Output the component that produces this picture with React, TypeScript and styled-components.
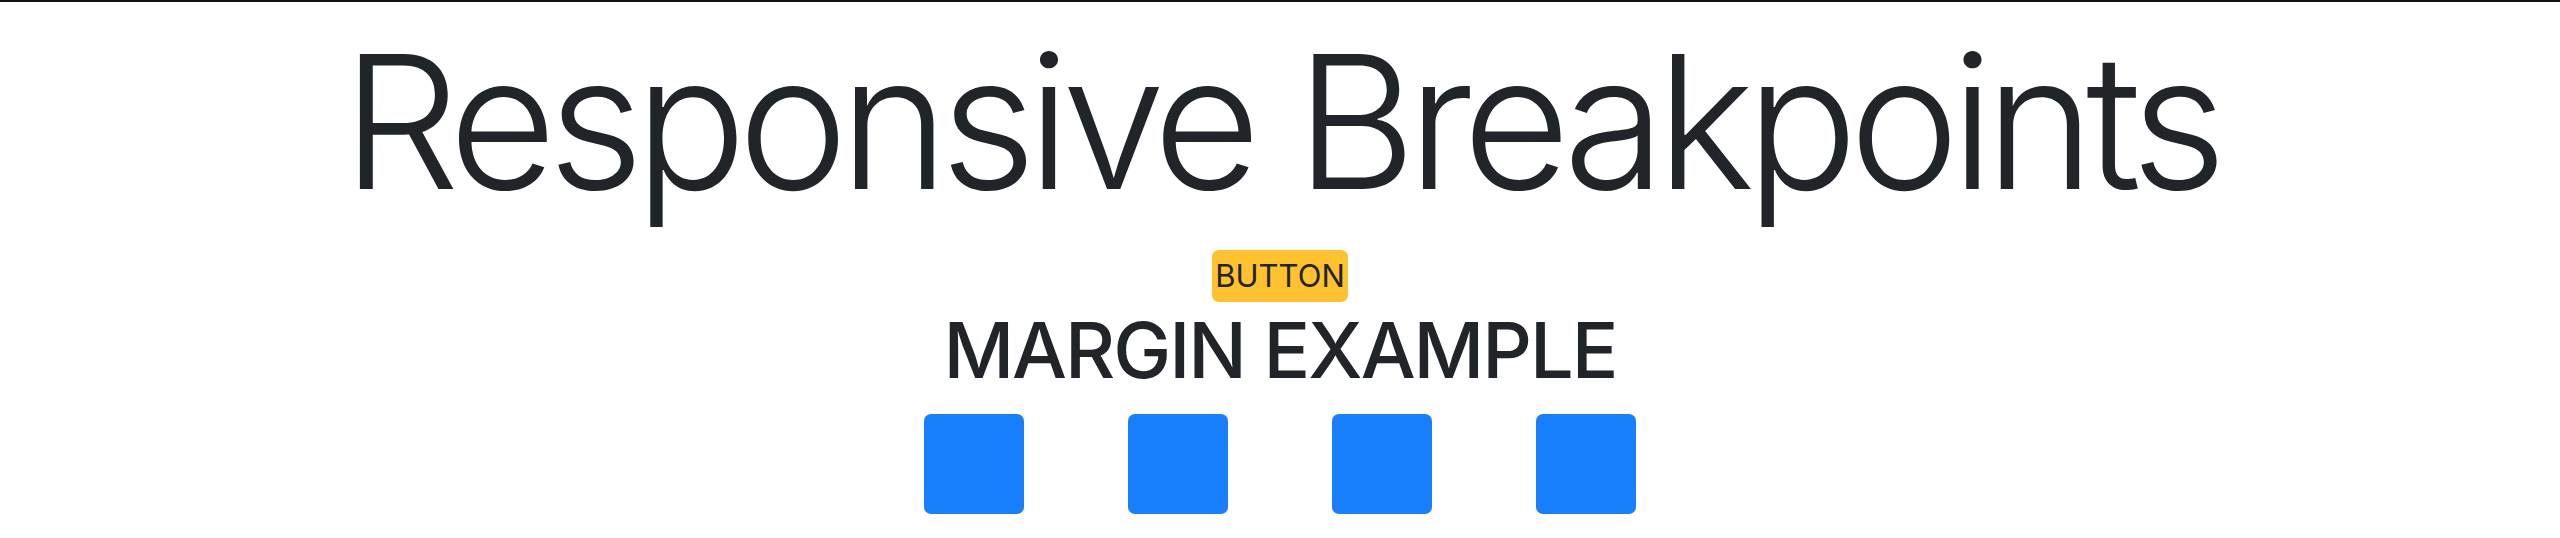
import React from "react";
import styled, { createGlobalStyle } from "styled-components";

const GlobalStyle = createGlobalStyle`
  html, body {
    margin: 0;
    padding: 0;
    background: #ffffff;
  }
  body {
    border-top: 2px solid #111111;
    font-family: Inter, Roboto, "Liberation Sans", Arial, sans-serif;
    color: #212529;
  }
`;

const Page = styled.main`
  display: flex;
  flex-direction: column;
  align-items: center;
  padding-top: 8px;
`;

const Title = styled.h1`
  margin: 0;
  font-size: 186px;
  font-weight: 300;
  line-height: 223px;
  letter-spacing: -8.8px;
  text-align: center;
`;

const WarningButton = styled.button`
  margin-top: 17px;
  font-family: Inter, Roboto, "Liberation Sans", Arial, sans-serif;
  font-size: 31px;
  font-weight: 400;
  line-height: 48px;
  color: #212529;
  background: #ffc12e;
  border: none;
  border-radius: 7px;
  padding: 2px 3px;
  text-transform: uppercase;
  cursor: pointer;
`;

const Heading = styled.h2`
  margin: 2px 0 0;
  font-size: 77.5px;
  font-weight: 500;
  line-height: 93px;
  letter-spacing: -2px;
  text-transform: uppercase;
`;

const BoxRow = styled.div`
  display: flex;
  justify-content: center;
  padding-top: 17px;
`;

const Box = styled.div`
  width: 100px;
  height: 100px;
  margin: 0 52px;
  background: #177ffc;
  border-radius: 7px;
`;

export default function App() {
  return (
    <>
      <GlobalStyle />
      <Page>
        <Title>Responsive Breakpoints</Title>
        <WarningButton>Button</WarningButton>
        <Heading>Margin Example</Heading>
        <BoxRow>
          {[0, 1, 2, 3].map((i) => (
            <Box key={i} />
          ))}
        </BoxRow>
      </Page>
    </>
  );
}
